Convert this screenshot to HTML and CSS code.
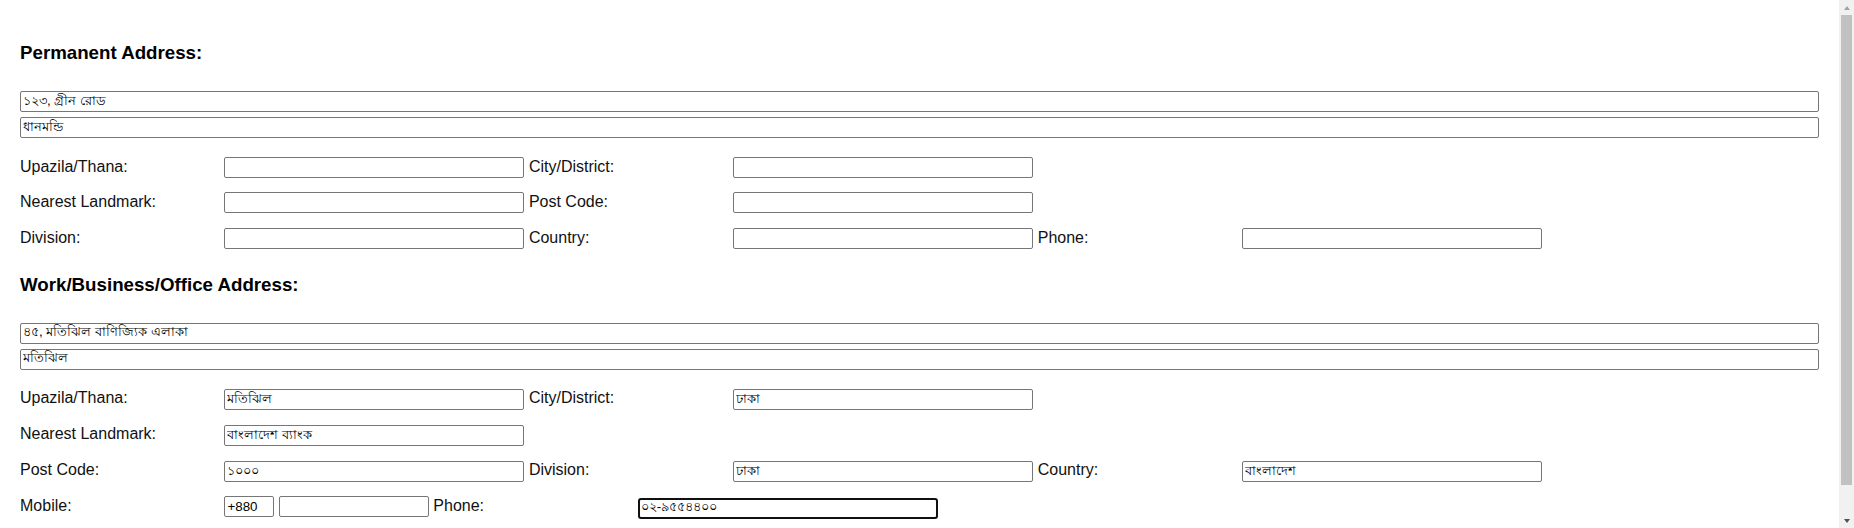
FILE: index.html
```html
<!DOCTYPE html>
<html lang="en">
<head>
<meta charset="utf-8">
<title>Address Form</title>
<link rel="stylesheet" href="styles.css">
</head>
<body>
<form class="page">
  <section class="section">
    <h3 class="section-title">Permanent Address:</h3>
    <div class="address-lines">
      <input class="field field-full" type="text" value="১২৩, গ্রীন রোড">
      <input class="field field-full" type="text" value="ধানমন্ডি">
    </div>
    <div class="rows">
      <div class="row">
        <label class="label">Upazila/Thana:</label><input class="field" type="text">
        <label class="label">City/District:</label><input class="field" type="text">
      </div>
      <div class="row">
        <label class="label">Nearest Landmark:</label><input class="field" type="text">
        <label class="label">Post Code:</label><input class="field" type="text">
      </div>
      <div class="row">
        <label class="label">Division:</label><input class="field" type="text">
        <label class="label">Country:</label><input class="field" type="text">
        <label class="label">Phone:</label><input class="field" type="text">
      </div>
    </div>
  </section>

  <section class="section section-next">
    <h3 class="section-title">Work/Business/Office Address:</h3>
    <div class="address-lines">
      <input class="field field-full" type="text" value="৪৫, মতিঝিল বাণিজ্যিক এলাকা">
      <input class="field field-full" type="text" value="মতিঝিল">
    </div>
    <div class="rows">
      <div class="row">
        <label class="label">Upazila/Thana:</label><input class="field" type="text" value="মতিঝিল">
        <label class="label">City/District:</label><input class="field" type="text" value="ঢাকা">
      </div>
      <div class="row">
        <label class="label">Nearest Landmark:</label><input class="field" type="text" value="বাংলাদেশ ব্যাংক">
      </div>
      <div class="row">
        <label class="label">Post Code:</label><input class="field" type="text" value="১০০০">
        <label class="label">Division:</label><input class="field" type="text" value="ঢাকা">
        <label class="label">Country:</label><input class="field" type="text" value="বাংলাদেশ">
      </div>
      <div class="row">
        <label class="label">Mobile:</label><input class="field field-code" type="text" value="+880"><input class="field field-mobile" type="text">
        <label class="label">Phone:</label><input class="field field-focused" type="text" value="০২-৯৫৫৪৪০০">
      </div>
    </div>
  </section>
</form>
<div class="scrollbar" aria-hidden="true">
  <span class="scroll-arrow scroll-up"></span>
  <span class="scroll-thumb"></span>
  <span class="scroll-arrow scroll-down"></span>
</div>
</body>
</html>
```

FILE: styles.css
```css
html, body {
  margin: 0;
  padding: 0;
  background: #ffffff;
}

body {
  font-family: "Liberation Sans", Arial, sans-serif;
  font-size: 16px;
  color: #111111;
}

.page {
  padding: 42px 35px 43px 20px;
}

.section-next {
  margin-top: 25px;
}

.section-title {
  margin: 0 0 27px;
  font-size: 18.72px;
  line-height: 22px;
  font-weight: bold;
  color: #000000;
}

.address-lines {
  display: flex;
  flex-direction: column;
  gap: 5px;
  margin-bottom: 19px;
}

.rows {
  display: flex;
  flex-direction: column;
  gap: 14.4px;
}

.row {
  display: flex;
  align-items: baseline;
  column-gap: 4.45px;
}

.label {
  flex: none;
  width: 200px;
  font-size: 16px;
}

.field {
  flex: none;
  box-sizing: border-box;
  width: 300px;
  height: 21px;
  margin: 0;
  padding: 1px 2px;
  border: 1px solid #767676;
  border-radius: 2px;
  background: #ffffff;
  color: #000000;
  font-family: "Liberation Sans", Arial, sans-serif;
  font-size: 13.33px;
  outline: none;
}

.field-full {
  display: block;
  width: 100%;
}

.field-code {
  width: 50px;
}

.field-mobile {
  width: 150px;
}

.field-focused {
  border: 2px solid #101010;
  border-radius: 3px;
  padding: 0 1px;
}

/* classic scrollbar drawn over the right edge of the viewport */
.scrollbar {
  position: fixed;
  top: 0;
  right: 0;
  width: 15px;
  height: 100vh;
  background: #f1f1f1;
  display: flex;
  flex-direction: column;
  align-items: center;
}

.scroll-arrow {
  flex: none;
  width: 15px;
  height: 15px;
  display: flex;
  align-items: center;
  justify-content: center;
}

.scroll-arrow::before {
  content: "";
  width: 0;
  height: 0;
  border-left: 3.5px solid transparent;
  border-right: 3.5px solid transparent;
}

.scroll-up::before {
  border-bottom: 4px solid #a3a3a3;
}

.scroll-down {
  margin-top: auto;
}

.scroll-down::before {
  border-top: 4px solid #505050;
}

.scroll-thumb {
  flex: none;
  width: 11px;
  height: 470px;
  background: #c1c1c1;
}
```
